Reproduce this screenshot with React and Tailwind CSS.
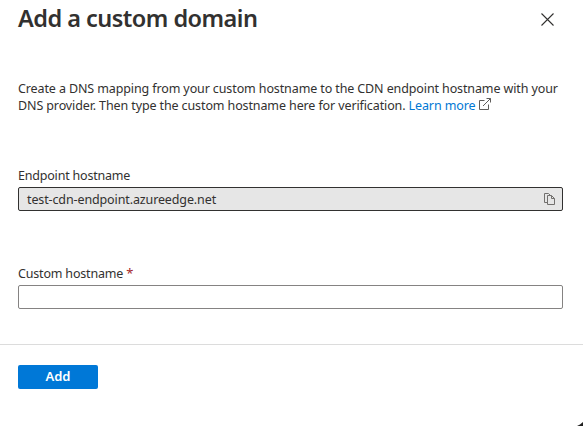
function CloseIcon() {
  return (
    <svg width="13" height="13" viewBox="0 0 13 13" fill="none" stroke="#323130" strokeWidth="1.1">
      <path d="M0.5 0.5 12.5 12.5M12.5 0.5 0.5 12.5" />
    </svg>
  );
}

function ExternalIcon() {
  return (
    <svg className="ml-1 inline-block align-baseline" width="12" height="12" viewBox="0 0 12 12" fill="none" stroke="#605e5c" strokeWidth="1">
      <path d="M5.5 2.5h-5v9h9v-5M7.5 0.5h4v4M11.5 0.5 4 8" />
    </svg>
  );
}

function CopyIcon() {
  return (
    <svg width="11" height="12" viewBox="0 0 11 12" fill="none" stroke="#72706e" strokeWidth="1">
      <path d="M3.5 9.5h-3v-9h4l2 2" />
      <path d="M3.5 2.5h4l3 3v6h-7zM7.5 2.5v3h3" />
    </svg>
  );
}

export default function App() {
  return (
    <main className="relative flex h-[426px] w-[583px] flex-col overflow-hidden bg-white font-['Noto_Sans',sans-serif] text-[12.5px] leading-[17px] text-[#323130]">
      <header className="flex h-20 items-start justify-between pl-[18px] pr-[29px] pt-[2px]">
        <h1 className="text-[23.5px] font-semibold leading-8 tracking-[-0.53px] whitespace-nowrap">Add a custom domain</h1>
        <button aria-label="Close" className="mt-[11px]"><CloseIcon /></button>
      </header>

      <section className="h-[264px] px-[18px] pr-5">
        <p className="h-[87px] whitespace-nowrap">
          <span className="block h-[17px] tracking-[-0.115px]">Create a DNS mapping from your custom hostname to the CDN endpoint hostname with your</span>
          <span className="block h-[17px] tracking-[-0.115px]">
            DNS provider. Then type the custom hostname here for verification. <a className="text-[#0078d4]">Learn more</a>
            <ExternalIcon />
          </span>
        </p>
        <label className="block h-5 tracking-[-0.2px]">Endpoint hostname</label>
        <div className="flex h-6 items-center justify-between rounded-[2px] border border-[#323130] bg-[#e6e6e6] pl-2 pr-[7px]">
          <span className="tracking-[-0.12px]">test-cdn-endpoint.azureedge.net</span>
          <CopyIcon />
        </div>
        <label className="mt-[54px] block h-5 tracking-[-0.18px]">
          Custom hostname <span className="text-[13px] text-[#a4262c]">*</span>
        </label>
        <div className="h-6 rounded-[2px] border border-[#858382]" />
      </section>

      <footer className="border-t border-[#dcdcdc] px-[18px] pt-5">
        <button className="flex h-6 w-20 items-center justify-center rounded-[2px] bg-[#0078d7] pb-[2px] text-[13px] font-semibold text-white">Add</button>
      </footer>

      <svg className="absolute bottom-0 right-0" width="6" height="4" viewBox="0 0 6 4">
        <path d="M0 4 3 2.5 6 0v4z" fill="#222" />
      </svg>
    </main>
  );
}
